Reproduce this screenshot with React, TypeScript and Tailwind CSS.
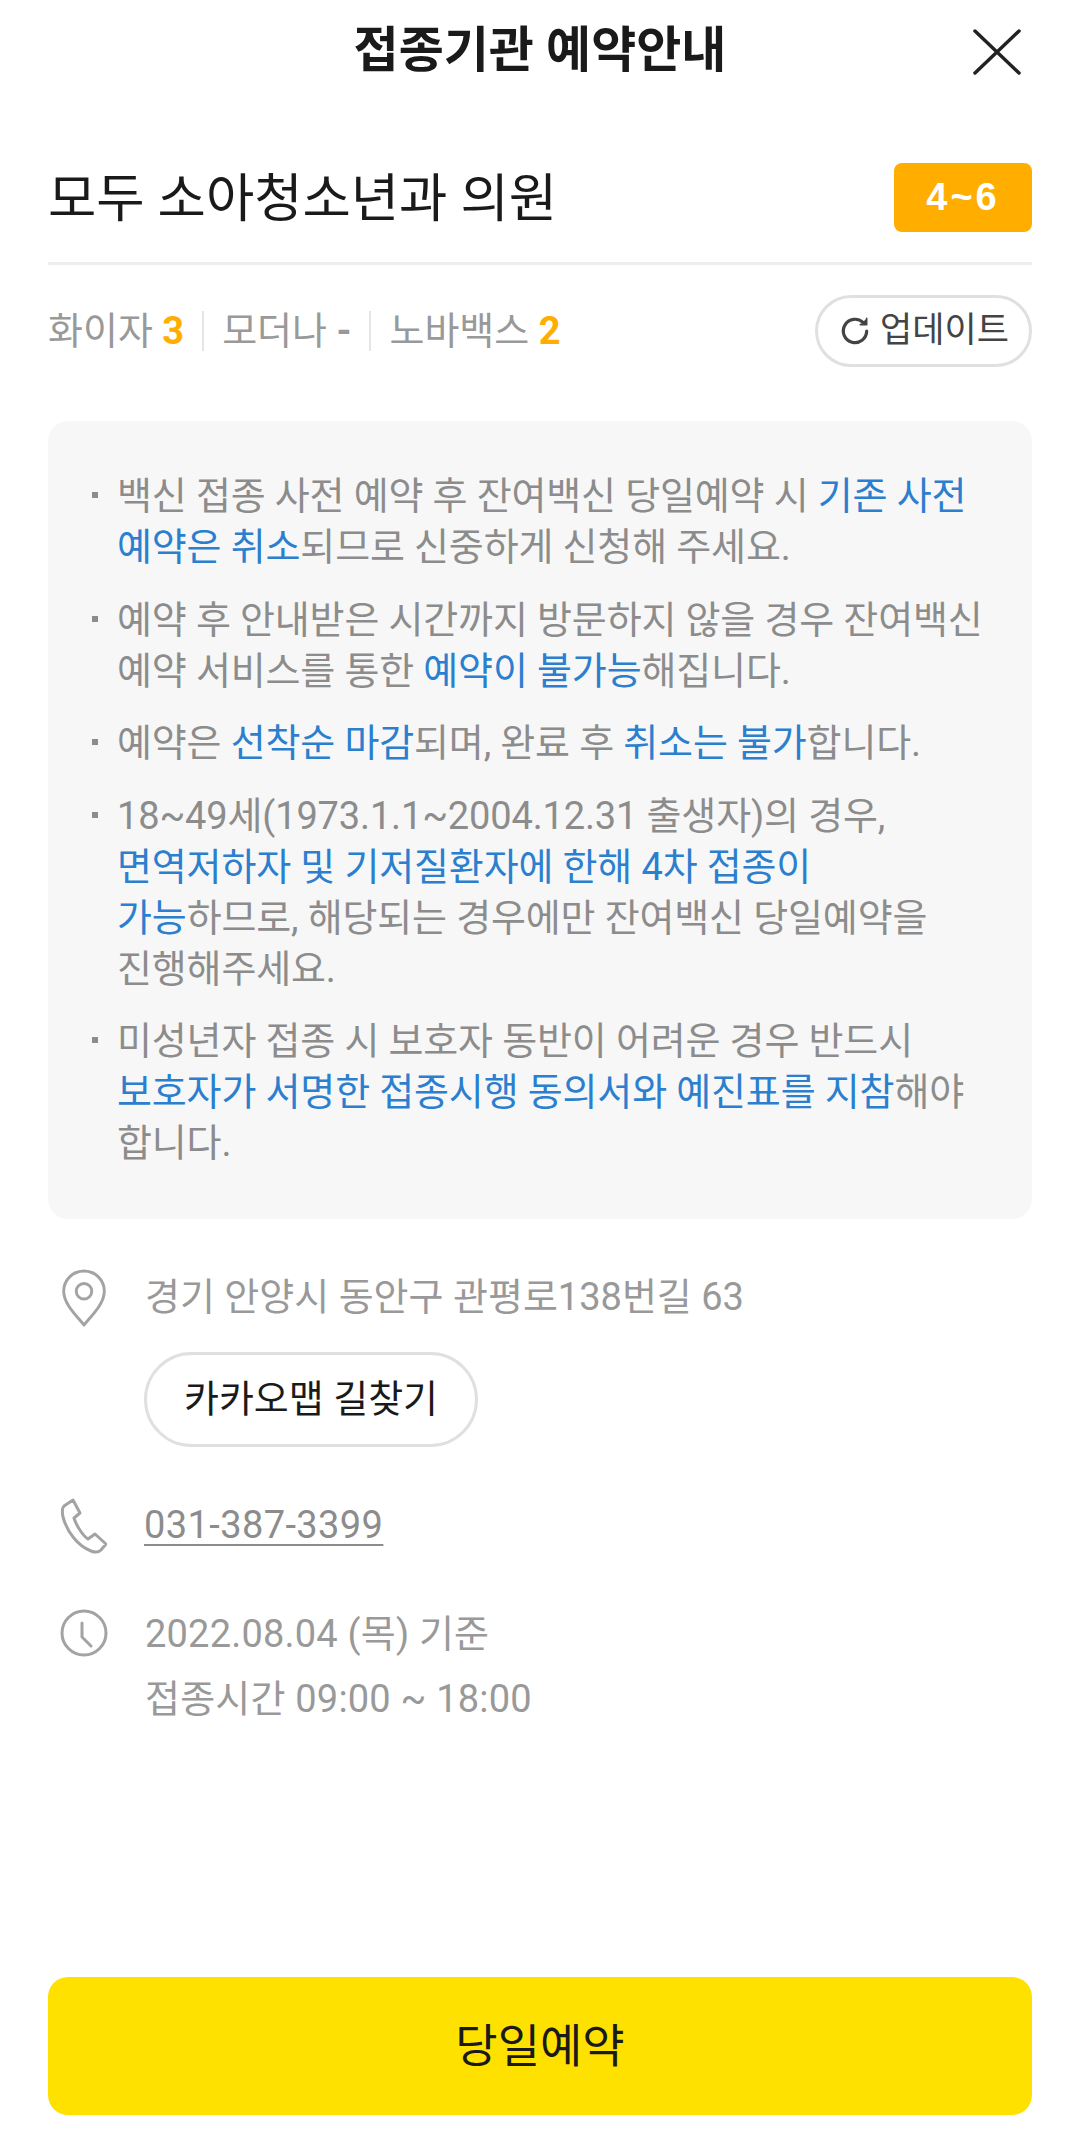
import React from 'react';

const Blue = ({ children }: { children: React.ReactNode }) => (
  <span className="text-[#2b7fce]">{children}</span>
);

const notices: React.ReactNode[] = [
  <>백신 접종 사전 예약 후 잔여백신 당일예약 시 <Blue>기존 사전<br />예약은 취소</Blue>되므로 신중하게 신청해 주세요.</>,
  <>예약 후 안내받은 시간까지 방문하지 않을 경우 잔여백신<br />예약 서비스를 통한 <Blue>예약이 불가능</Blue>해집니다.</>,
  <>예약은 <Blue>선착순 마감</Blue>되며, 완료 후 <Blue>취소는 불가</Blue>합니다.</>,
  <>18~49세(1973.1.1~2004.12.31 출생자)의 경우,<br /><Blue>면역저하자 및 기저질환자에 한해 4차 접종이<br />가능</Blue>하므로, 해당되는 경우에만 잔여백신 당일예약을<br />진행해주세요.</>,
  <>미성년자 접종 시 보호자 동반이 어려운 경우 반드시<br /><Blue>보호자가 서명한 접종시행 동의서와 예진표를 지참</Blue>해야<br />합니다.</>,
];

const App = () => {
  return (
    <div className="w-[1080px] h-[2150px] bg-white flex flex-col font-['Roboto','Noto_Sans_CJK_KR',sans-serif] text-[#1a1a1a] overflow-hidden">
      {/* Header */}
      <div className="relative h-[100px] shrink-0 flex items-center justify-center">
        <h1 className="text-[49px] font-bold leading-none">접종기관 예약안내</h1>
        <button className="absolute right-[58px] top-[27px]">
          <svg width="50" height="50" viewBox="0 0 50 50" fill="none" stroke="#222" strokeWidth="3.5" strokeLinecap="round">
            <path d="M3 4 L47 46 M47 4 L3 46" />
          </svg>
        </button>
      </div>

      <div className="px-[48px] flex flex-col flex-1">
        {/* Title */}
        <div className="flex items-center justify-between h-[165px] border-b-[3px] border-[#eeeeee] pt-[62px] pb-[30px]">
          <h2 className="text-[52.5px] leading-none font-normal mt-[5px]">모두 소아청소년과 의원</h2>
          <span className="w-[138px] h-[69px] rounded-[8px] bg-[#ffae00] text-white font-bold text-[38px] tracking-[3px] font-['Liberation_Sans',sans-serif] flex items-center justify-center">4~6</span>
        </div>

        {/* Vaccines */}
        <div className="flex items-center justify-between mt-[30px] h-[72px] text-[38px] text-[#999999]">
          <div className="flex items-center">
            <span>화이자 <b className="text-[#ffae00]">3</b></span>
            <span className="w-[2px] h-[40px] bg-[#e5e5e5] mx-[18px]" />
            <span>모더나 <b>-</b></span>
            <span className="w-[2px] h-[40px] bg-[#e5e5e5] mx-[18px]" />
            <span>노바백스 <b className="text-[#ffae00]">2</b></span>
          </div>
          <button className="h-[72px] w-[217px] rounded-full border-[3px] border-[#e0e0e0] flex items-center justify-center gap-[8px] text-[#444444] text-[35px]">
            <svg width="34" height="34" viewBox="0 0 32 32" fill="none" stroke="#444" strokeWidth="3" strokeLinecap="round" strokeLinejoin="round">
              <path d="M27 16a11 11 0 1 1-3.2-7.8" />
              <path d="M27 4v6h-6" fill="#444" strokeWidth="1.5" />
            </svg>
            업데이트
          </button>
        </div>

        {/* Notice */}
        <div className="mt-[54px] h-[798px] rounded-[20px] bg-[#f7f7f7] pl-[44px] pt-[50px] flex flex-col gap-[21.5px] text-[38px] leading-[51px] tracking-[-0.15px] text-[#8c8c8c] whitespace-nowrap">
          {notices.map((notice, index) => (
            <div key={index} className="flex">
              <span className="w-[6px] h-[6px] bg-[#8c8c8c] mt-[21px] mr-[19px] shrink-0" />
              <p>{notice}</p>
            </div>
          ))}
        </div>

        {/* Info */}
        <div className="mt-[52px] text-[38px] text-[#999999] flex flex-col">
          <div className="flex">
            <svg className="w-[46px] h-[58px] ml-[13px] mr-[38px] -mt-[2px] shrink-0" viewBox="0 0 46 60" fill="none" stroke="#a3a3a3" strokeWidth="3">
              <path d="M23 58 C15 48 2 36 2 23 A21 21 0 0 1 44 23 C44 36 31 48 23 58 Z" strokeLinejoin="round" />
              <circle cx="23" cy="23" r="8" />
            </svg>
            <div className="flex flex-col items-start">
              <p className="leading-[52px]">경기 안양시 동안구 관평로138번길 63</p>
              <button className="mt-[29px] -ml-[1px] w-[334px] h-[95px] rounded-full border-[3px] border-[#e0e0e0] text-[#1a1a1a]">카카오맵 길찾기</button>
            </div>
          </div>

          <div className="flex items-center mt-[50px]">
            <svg className="w-[46px] h-[56px] ml-[13px] mr-[37px] shrink-0" viewBox="0 0 46 56" fill="none" stroke="#a3a3a3" strokeWidth="3" strokeLinejoin="round">
              <path d="M12 2 L3 8 C1 10 1 14 2 19 C6 34 17 48 30 53 C35 55 38 54 40 52 L45 46 L34 36 L27 41 C22 38 15 27 13 20 L19 15 Z" />
            </svg>
            <a className="underline decoration-[2px] underline-offset-[6px] tracking-[0.4px] text-[#8c8c8c]">031-387-3399</a>
          </div>

          <div className="flex mt-[54px]">
            <svg className="w-[48px] h-[48px] ml-[12px] mr-[37px] mt-[1px] shrink-0" viewBox="0 0 48 48" fill="none" stroke="#a3a3a3" strokeWidth="3" strokeLinecap="round">
              <circle cx="24" cy="24" r="22" />
              <path d="M22 14 V28 L31 37" />
            </svg>
            <div className="flex flex-col gap-[13px] leading-[52px] tracking-[0.2px]">
              <p>2022.08.04 (목) 기준</p>
              <p>접종시간 09:00 ~ 18:00</p>
            </div>
          </div>
        </div>

        {/* Reserve */}
        <button className="mt-auto mb-[35px] h-[138px] rounded-[20px] bg-[#ffe100] text-[46px] text-[#1a1a1a]">당일예약</button>
      </div>
    </div>
  );
};

export default App;
